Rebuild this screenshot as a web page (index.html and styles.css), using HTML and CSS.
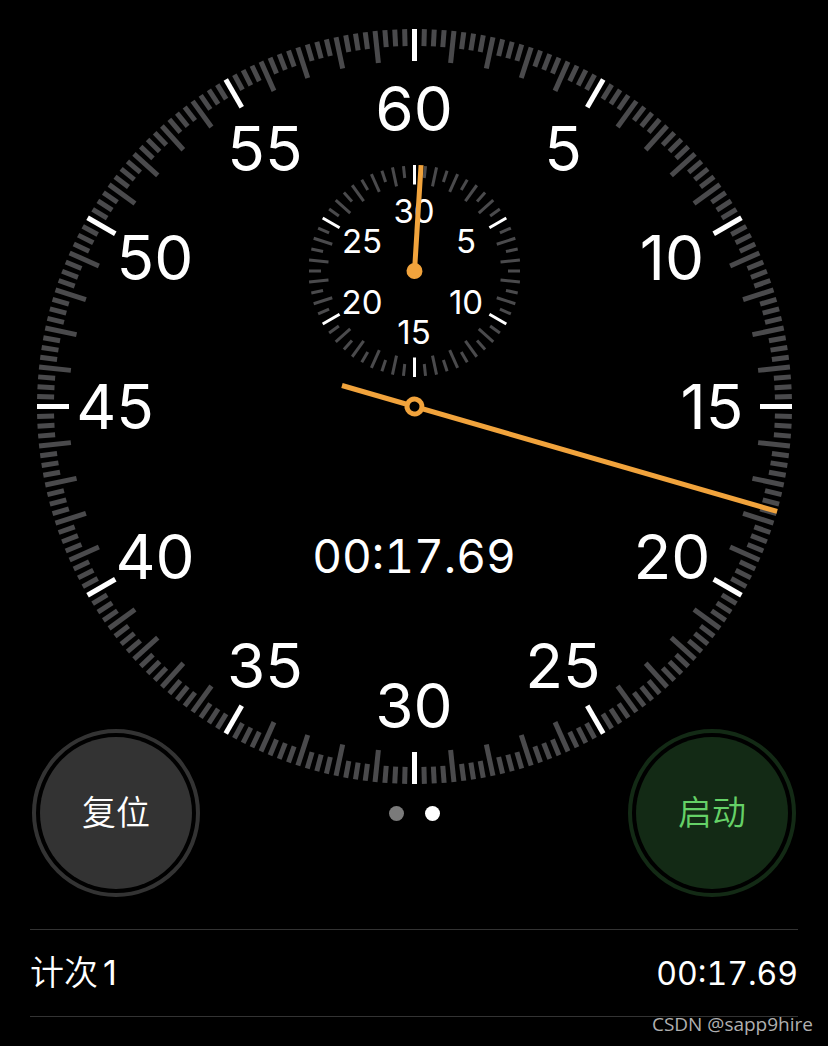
FILE: index.html
```
<!DOCTYPE html>
<html lang="zh-CN">
<head>
<meta charset="utf-8">
<meta name="viewport" content="width=device-width, initial-scale=1">
<title>秒表</title>
<link rel="stylesheet" href="styles.css">
</head>
<body>
<main class="stopwatch">
  <svg class="dial" viewBox="0 0 828 784" role="img" aria-label="00:17.69">
    <defs>
      <path id="short" d="M0-377.5V-360.5"/>
      <path id="long" d="M0-377.5V-345.5"/>
      <g id="quad">
        <use href="#short" transform="rotate(1.5)"/>
        <use href="#short" transform="rotate(3)"/>
        <use href="#short" transform="rotate(4.5)"/>
      </g>
      <!-- five seconds of the outer scale -->
      <g id="sector">
        <use href="#quad"/>
        <use href="#long" transform="rotate(6)"/>
        <use href="#quad" transform="rotate(6)"/>
        <use href="#long" transform="rotate(12)"/>
        <use href="#quad" transform="rotate(12)"/>
        <use href="#long" transform="rotate(18)"/>
        <use href="#quad" transform="rotate(18)"/>
        <use href="#long" transform="rotate(24)"/>
        <use href="#quad" transform="rotate(24)"/>
        <use href="#long" class="major"/>
      </g>
      <path id="sub-short" d="M0-105.5V-93.5"/>
      <path id="sub-long" d="M0-106V-86.5"/>
      <!-- five minutes of the inner scale -->
      <g id="sub-sector">
        <use href="#sub-short" transform="rotate(6)"/>
        <use href="#sub-long" transform="rotate(12)"/>
        <use href="#sub-short" transform="rotate(18)"/>
        <use href="#sub-long" transform="rotate(24)"/>
        <use href="#sub-short" transform="rotate(30)"/>
        <use href="#sub-long" transform="rotate(36)"/>
        <use href="#sub-short" transform="rotate(42)"/>
        <use href="#sub-long" transform="rotate(48)"/>
        <use href="#sub-short" transform="rotate(54)"/>
        <use href="#sub-long" class="major"/>
      </g>
    </defs>

    <g class="ticks" transform="translate(414.5 406.5)">
      <use href="#sector"/>
      <use href="#sector" transform="rotate(30)"/>
      <use href="#sector" transform="rotate(60)"/>
      <use href="#sector" transform="rotate(90)"/>
      <use href="#sector" transform="rotate(120)"/>
      <use href="#sector" transform="rotate(150)"/>
      <use href="#sector" transform="rotate(180)"/>
      <use href="#sector" transform="rotate(210)"/>
      <use href="#sector" transform="rotate(240)"/>
      <use href="#sector" transform="rotate(270)"/>
      <use href="#sector" transform="rotate(300)"/>
      <use href="#sector" transform="rotate(330)"/>
    </g>
    <g class="numerals">
      <text x="414" y="131">60</text>
      <text x="563" y="171">5</text>
      <text x="672" y="280">10</text>
      <text x="712" y="429">15</text>
      <text x="672" y="579">20</text>
      <text x="563" y="688">25</text>
      <text x="414" y="728">30</text>
      <text x="265" y="688">35</text>
      <text x="155" y="579">40</text>
      <text x="115" y="429">45</text>
      <text x="155" y="280">50</text>
      <text x="265" y="171">55</text>
    </g>

    <g class="ticks ticks-sub" transform="translate(414.5 271)">
      <use href="#sub-sector"/>
      <use href="#sub-sector" transform="rotate(60)"/>
      <use href="#sub-sector" transform="rotate(120)"/>
      <use href="#sub-sector" transform="rotate(180)"/>
      <use href="#sub-sector" transform="rotate(240)"/>
      <use href="#sub-sector" transform="rotate(300)"/>
    </g>
    <g class="numerals numerals-sub">
      <text x="414" y="223">30</text>
      <text x="466" y="253">5</text>
      <text x="466" y="314">10</text>
      <text x="414" y="344">15</text>
      <text x="362" y="314">20</text>
      <text x="362" y="253">25</text>
    </g>
    <g class="hand hand-sub" transform="translate(414.5 271) rotate(3.54)">
      <path d="M0 0V-106"/>
      <circle class="hub" r="8"/>
    </g>

    <text class="elapsed" x="414" y="573">00:17.69</text>
    <g class="hand" transform="translate(414.5 406.5) rotate(106.14)">
      <path d="M0 75.5V-377.5"/>
      <circle class="ring" r="7.5"/>
    </g>
  </svg>

  <div class="controls">
    <button class="round reset" type="button">复位</button>
    <div class="pages">
      <button class="dot" type="button" aria-label="数字"></button>
      <button class="dot current" type="button" aria-label="指针"></button>
    </div>
    <button class="round start" type="button">启动</button>
  </div>

  <ol class="laps">
    <li class="lap"><span class="lap-name"><span class="lap-word">计次</span><span>1</span></span><span class="lap-time">00:17.69</span></li>
  </ol>
  <div class="credit">CSDN @sapp9hire</div>
</main>
</body>
</html>
```
FILE: styles.css
```
* {
  box-sizing: border-box;
}

body {
  margin: 0;
  background: #000;
  color: #fff;
  font-family: Inter, "Noto Sans CJK SC", sans-serif;
}

.stopwatch {
  position: relative;
  min-height: 100vh;
}

.dial {
  display: block;
  width: 100%;
}

.ticks {
  stroke: #4a4a4c;
  stroke-width: 5px;
}

.ticks-sub {
  stroke-width: 3px;
}

.major {
  stroke: #fff;
}

.numerals,
.elapsed {
  fill: #fff;
  font-size: 62px;
  text-anchor: middle;
}

.numerals-sub {
  font-size: 33px;
}

.elapsed {
  font-size: 46px;
  font-variant-numeric: tabular-nums;
}

.hand {
  stroke: #f1a33c;
  stroke-width: 5px;
}

.hub {
  fill: #f1a33c;
  stroke: none;
}

.ring {
  fill: #000;
}

.controls {
  position: relative;
  display: flex;
  justify-content: space-between;
  align-items: center;
  margin-top: -55px;
  padding: 0 32px;
}

.round {
  width: 168px;
  height: 168px;
  padding: 4px;
  border: 4px solid;
  border-radius: 50%;
  background-clip: content-box;
  font-family: Inter, "Noto Sans CJK SC", sans-serif;
  font-size: 34px;
  font-weight: 350;
  line-height: 40px;
}

.reset {
  border-color: #333;
  background-color: #333;
  color: #fff;
}

.start {
  border-color: #132a15;
  background-color: #132a15;
  color: #65d167;
}

.pages {
  display: flex;
  gap: 21px;
}

.dot {
  width: 15px;
  height: 15px;
  padding: 0;
  border: 0;
  border-radius: 50%;
  background: #7a7a7a;
}

.current {
  background: #fff;
}

.laps {
  margin: 32px 30px 0;
  padding: 0;
  border-top: 1px solid #333;
  list-style: none;
}

.lap {
  display: flex;
  justify-content: space-between;
  align-items: baseline;
  border-bottom: 1px solid #333;
  font-size: 34px;
  line-height: 86px;
}

.lap-name {
  display: flex;
  gap: 5px;
}

.lap-word {
  font-weight: 350;
}

.lap-time {
  font-size: 32px;
  line-height: 80px;
  font-variant-numeric: tabular-nums;
}

.credit {
  position: absolute;
  right: 15px;
  bottom: 9px;
  color: #b0b0b0;
  font: 19px/26px "Open Sans", sans-serif;
}
```
